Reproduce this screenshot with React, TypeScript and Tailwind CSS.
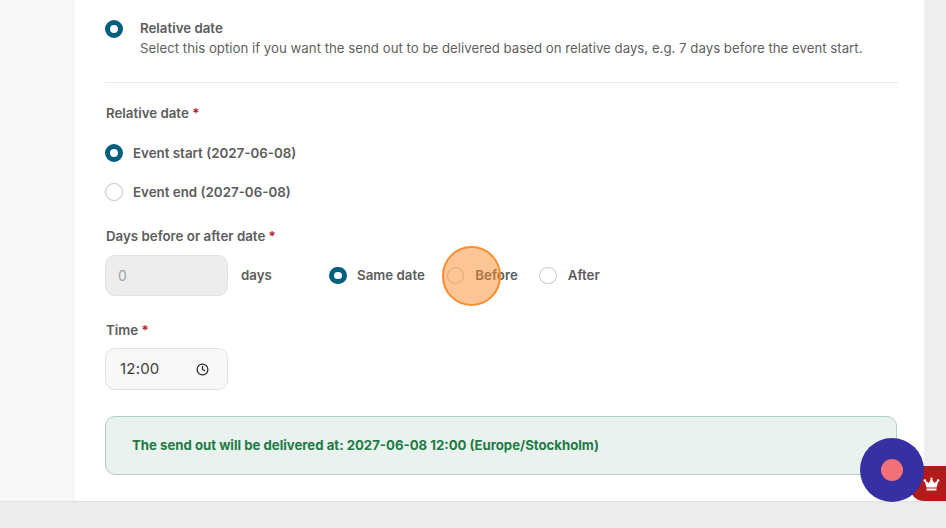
import { Clock } from "lucide-react";

const Radio = ({ checked }: { checked?: boolean }) =>
  checked ? (
    <span className="block w-[17.5px] h-[17.5px] shrink-0 rounded-full border-[5.5px] border-[#005f7f] bg-white" />
  ) : (
    <span className="block w-[17.5px] h-[17.5px] shrink-0 rounded-full border border-[#c4c4c4] bg-white" />
  );

const Required = () => <span className="text-[#b01c1c]"> *</span>;

const App = () => {
  return (
    <div className="relative w-[946px] h-[528px] overflow-hidden bg-[#ececec] font-['Inter',sans-serif] text-[13.3px] text-[#5c5c5c]">
      <div className="flex h-[502px] border-b border-[#e2e2e2]">
        <div className="w-[74px] bg-[#f8f8f8] border-r border-[#f0f0f0]" />
        <main className="w-[850px] bg-white pl-[31px] pr-[26px] pt-[18px]">
          <div className="flex items-start gap-[17.5px] h-[65px] border-b border-[#ebebeb]">
            <div className="pt-[2px]">
              <Radio checked />
            </div>
            <div className="leading-[20px]">
              <div className="font-semibold">Relative date</div>
              <div className="text-[13.25px] text-[#5f5f5f]">
                Select this option if you want the send out to be delivered based on relative days, e.g. 7 days before the event start.
              </div>
            </div>
          </div>

          <div className="mt-[20px] pl-[1px] font-semibold leading-[20px]">
            Relative date
            <Required />
          </div>
          <div className="mt-[20px] flex items-center gap-[10.5px] h-[20px] font-semibold text-[13.35px]">
            <Radio checked />
            Event start (2027-06-08)
          </div>
          <div className="mt-[19px] flex items-center gap-[10.5px] h-[20px] font-semibold text-[13.35px]">
            <Radio />
            Event end (2027-06-08)
          </div>

          <div className="mt-[24px] pl-[1px] font-semibold leading-[20px]">
            Days before or after date
            <Required />
          </div>
          <div className="mt-[9px] flex items-center h-[41px] font-semibold">
            <div className="flex items-center w-[123px] h-[41px] rounded-[10px] border border-[#e2e2e2] bg-[#ededed] pl-[12px] text-[14px] font-normal text-[#a3a3a3]">
              0
            </div>
            <span className="ml-[13px] w-[88px]">days</span>
            <div className="flex items-center gap-[10.5px]">
              <Radio checked />
              <span>Same date</span>
            </div>
            <div className="ml-[22px] flex items-center gap-[11px]">
              <Radio />
              <span>Before</span>
            </div>
            <div className="ml-[21.5px] flex items-center gap-[11px]">
              <Radio />
              <span>After</span>
            </div>
          </div>

          <div className="mt-[24px] pl-[1px] font-semibold leading-[20px]">
            Time
            <Required />
          </div>
          <div className="mt-[8px] flex items-center justify-between w-[123px] h-[42px] rounded-[10px] border border-[#e2e2e2] bg-[#f8f8f8] pl-[14px] pr-[18px] text-[15px] text-[#3d3d3d]">
            <span className="tracking-[0.2px] pt-[1px]">12:00</span>
            <Clock size={13} strokeWidth={2.2} className="text-[#222]" />
          </div>

          <div className="mt-[26px] flex items-center w-[792px] h-[59px] rounded-[10px] border border-[#b3cfc0] bg-[#e9f2ee] pl-[26px] text-[13.2px] font-bold text-[#1f7a45]">
            The send out will be delivered at: 2027-06-08 12:00 (Europe/Stockholm)
          </div>
        </main>
        <div className="flex-1 bg-[#eeeeee]" />
      </div>

      {/* recording overlays */}
      <div className="absolute left-[442px] top-[246px] w-[59px] h-[60px] rounded-full border-2 border-[#fb8c2e] bg-[#fb8c2e]/50" />
      <div className="absolute left-[910px] top-[466px] flex items-center justify-end w-[50px] h-[35px] rounded-l-[14px] bg-[#b31b1b] pr-[20px] pt-[2px]">
        <svg width="17" height="15" viewBox="0 0 17 15" fill="#fff">
          <path d="M8.5 0.5a1.2 1.2 0 0 1 .7 2.1l2 3.4 2.9-2a1.2 1.2 0 1 1 1 .7l-1.6 5.8H3.5L1.9 4.7a1.2 1.2 0 1 1 1-.7l2.9 2 2-3.4a1.2 1.2 0 0 1 .7-2.1z" />
          <rect x="3.5" y="11.5" width="10" height="2" />
        </svg>
      </div>
      <div className="absolute left-[860px] top-[438px] flex items-center justify-center w-[64px] h-[64px] rounded-full bg-[#3730a3]">
        <span className="block w-[22px] h-[22px] rounded-full bg-[#f2707a]" />
      </div>
    </div>
  );
};

export default App;
